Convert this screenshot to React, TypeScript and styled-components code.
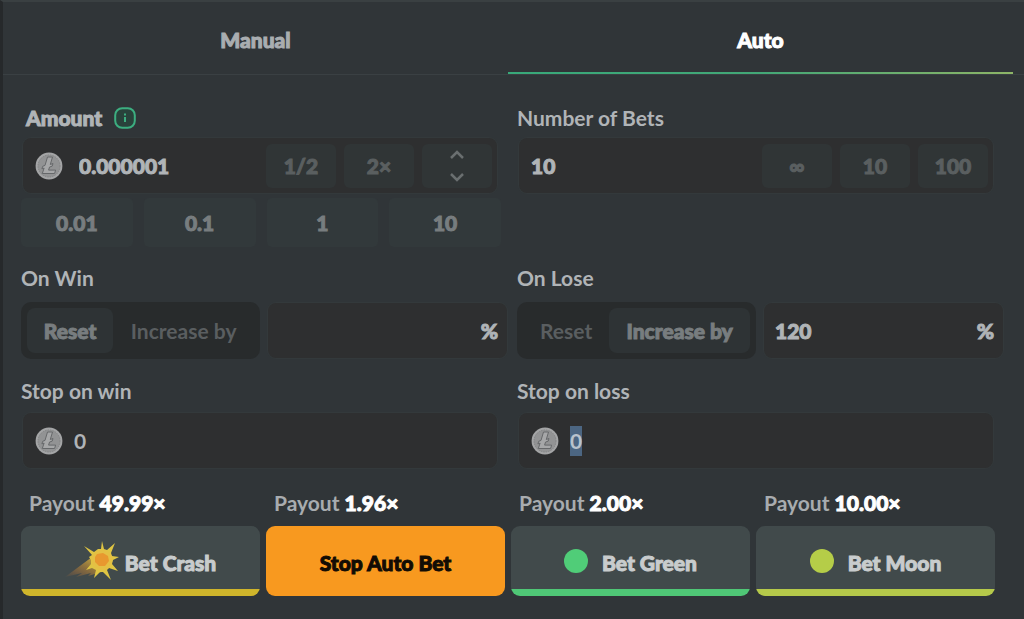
import React, { useEffect, useRef, useState } from "react";
import styled, { createGlobalStyle, css } from "styled-components";

const GlobalStyle = createGlobalStyle`
  * { box-sizing: border-box; }
  body { margin: 0; background: #303538; }
  button, input { font: inherit; color: inherit; margin: 0; padding: 0; border: 0; background: none; }
  button { cursor: pointer; }
  input:focus { outline: none; }
`;

const heavy = css`
  font-weight: 900;
  -webkit-text-stroke: 1px currentColor;
`;

const Panel = styled.main`
  min-height: 100vh;
  border-top: 2px solid #3a4042;
  border-left: 3px solid #26292b;
  background: #303538;
  color: #b0b4b7;
  font-family: Lato, "Liberation Sans", sans-serif;
  font-size: 21px;
  line-height: 24px;
  font-weight: 700;
`;

const Tabs = styled.div`
  display: grid;
  grid-template-columns: 1fr 1fr;
  padding-right: 11px;
  border-bottom: 1px solid #3a4043;
`;

const Tab = styled.button<{ $active?: boolean }>`
  height: 72px;
  padding-top: 6px;
  ${heavy}
  color: ${(p) => (p.$active ? "#ffffff" : "#a9adb0")};
  border-bottom: 2px solid transparent;
  border-image: ${(p) => (p.$active ? "linear-gradient(90deg, #38a97a, #43a877 50%, #8eb567) 1" : "none")};
`;

const Form = styled.form`
  padding: 31px 21px 20px 18px;
`;

const Columns = styled.div<{ $top?: number }>`
  display: grid;
  grid-template-columns: 1fr 1fr;
  column-gap: 10px;
  margin-top: ${(p) => p.$top ?? 0}px;
`;

const Column = styled.div`
  min-width: 0;
`;

const Caption = styled.div<{ $gap: number; $strong?: boolean }>`
  display: flex;
  align-items: center;
  gap: 12px;
  height: 24px;
  margin-bottom: ${(p) => p.$gap}px;
  padding-left: ${(p) => (p.$strong ? 5 : 0)}px;
  ${(p) => p.$strong && heavy}
`;

const InfoButton = styled.button`
  display: flex;
`;

const Field = styled.div`
  display: flex;
  align-items: center;
  gap: 8px;
  height: 55px;
  margin: 0 10px 0 2px;
  padding: 0 5px 0 12px;
  border-radius: 8px;
  background: #2e2f30;
  box-shadow: 0 0 0 1px #33393b;
`;

const Coin = styled.svg`
  flex: none;
  width: 28px;
  height: 28px;
`;

const TextInput = styled.input<{ $light?: boolean; $pad?: number }>`
  flex: 1;
  width: 0;
  min-width: 0;
  height: 30px;
  line-height: 30px;
  padding-left: ${(p) => p.$pad ?? 0}px;
  ${(p) => !p.$light && heavy}
  &::selection { background: #4c6682; color: #b9c3cc; }
`;

const FieldButton = styled.button`
  flex: none;
  width: 70px;
  height: 44px;
  border-radius: 6px;
  background: #303536;
  color: #5a5f60;
  ${heavy}
`;

const Stepper = styled.div`
  display: grid;
  grid-template-rows: 1fr 1fr;
  flex: none;
  width: 70px;
  height: 44px;
  border-radius: 6px;
  background: #303536;
  color: #6a6f70;
`;

const StepButton = styled.button`
  display: grid;
  place-items: center;
`;

const QuickRow = styled.div`
  display: grid;
  grid-template-columns: repeat(4, 1fr);
  gap: 11px;
  margin: 5px 6px 0 0;
`;

const QuickButton = styled.button`
  height: 49px;
  border-radius: 5px;
  background: #32393b;
  color: #787d7f;
  ${heavy}
`;

const ModeRow = styled.div`
  display: grid;
  grid-template-columns: 1fr 1fr;
  gap: 8px;
`;

const Toggle = styled.div`
  display: flex;
  height: 57px;
  padding: 6px;
  border-radius: 10px;
  background: #282b2c;
`;

const ToggleButton = styled.button<{ $on: boolean; $wide?: boolean }>`
  flex: ${(p) => (p.$wide ? 142 : 87)} 1 0;
  white-space: nowrap;
  border-radius: 8px;
  background: ${(p) => (p.$on ? "#2e3335" : "transparent")};
  color: ${(p) => (p.$on ? "#787d7f" : "#5a5e60")};
  ${(p) => p.$on && heavy}
`;

const Percent = styled(Field)`
  margin: 1px 0;
  padding: 0 9px 0 11px;
`;

const Unit = styled.span`
  ${heavy}
`;

const Bets = styled.div`
  display: grid;
  grid-template-columns: repeat(4, 1fr);
  gap: 6px;
  margin: 23px 8px 0 0;
`;

const Payout = styled.div`
  margin-bottom: 11px;
  padding-left: 8px;
  color: #a8acaf;
`;

const Multiplier = styled.strong`
  ${heavy}
  color: #ffffff;
`;

const BetButton = styled.button<{ $line?: string; $gap?: number }>`
  display: flex;
  align-items: center;
  justify-content: center;
  gap: ${(p) => p.$gap ?? 0}px;
  width: 100%;
  height: 70px;
  padding-top: 4px;
  border-radius: 9px;
  ${heavy}
  color: ${(p) => (p.$line ? "#c8cccd" : "#120c04")};
  background: ${(p) =>
    p.$line
      ? `linear-gradient(to top, ${p.$line} 7px, #414a4b 7px)`
      : "#f8991f"};
`;

const Dot = styled.span<{ $color: string }>`
  width: 24px;
  height: 24px;
  margin-top: -4px;
  border-radius: 50%;
  background: ${(p) => p.$color};
`;

const Comet = styled.svg`
  flex: none;
  width: 54px;
  height: 40px;
  margin-top: -4px;
`;

const CoinIcon = () => (
  <Coin viewBox="0 0 28 28" aria-hidden="true">
    <circle cx="14" cy="14" r="13.4" fill="#a4a5a6" />
    <circle cx="14" cy="14" r="11" fill="#929394" stroke="#848586" strokeDasharray="1.5 1" />
    <path d="M12.500 5h5l-2.200 7.500 2.700-1-.8 2.600-2.700 1-.9 3h7l-1 3.400H7.300l1.800-5.400-2.200.8.800-2.600 2.300-.9z" fill="#a6a7a8" stroke="#66686a" strokeWidth="1" />
  </Coin>
);

const InfoIcon = () => (
  <svg width="22" height="22" viewBox="0 0 22 22" fill="none" aria-hidden="true">
    <rect x="1.200" y="1.200" width="19.600" height="19.600" rx="7" fill="#29423b" stroke="#3cae80" strokeWidth="2" />
    <path d="M11 10v5M11 6.500v2" stroke="#3cae80" strokeWidth="2" />
  </svg>
);

const Chevron = ({ up }: { up?: boolean }) => (
  <svg width="16" height="10" viewBox="0 0 16 10" fill="none" stroke="currentColor" strokeWidth="2.500" aria-hidden="true">
    <path d={up ? "M2 8l6-6 6 6" : "M2 2l6 6 6-6"} />
  </svg>
);

const CrashIcon = () => (
  <Comet viewBox="0 0 54 40" aria-hidden="true">
    <defs>
      <linearGradient id="tail" x1="0" y1="1" x2="1" y2="0">
        <stop offset="0" stopColor="#a8663a" stopOpacity="0.050" />
        <stop offset="0.500" stopColor="#a07a3a" stopOpacity="0.800" />
        <stop offset="1" stopColor="#e0c040" />
      </linearGradient>
    </defs>
    <path d="M0 36L27 16 40 30 23 35 26 32 11 36 17 32z" fill="url(#tail)" />
    <path
      d="M19 5L29 11 33 8 36 8 37 0 39 8 42 9 50 2 46 12 47 15 54 16 48 19 47 23 53 30 44 27 42 29 46 39 38 31 35 31 29 37 31 29 27 27 21 29 26 23 26 19 24 16 27 14z"
      fill="#dfc543"
    />
    <circle cx="37" cy="19" r="10.500" fill="#e4c044" />
    <path d="M32 13l6-1 5 3 1 5-4 5-6 0-4-4 0-5z" fill="#e8982f" />
  </Comet>
);

type Mode = "reset" | "increase";

const ModeControl = ({ name, id, initial, value }: { name: string; id: string; initial: Mode; value: string }) => {
  const [mode, setMode] = useState<Mode>(initial);
  const isIncrease = mode === "increase";
  return (
    <Column>
      <Caption $gap={12} as="label" htmlFor={id}>{name}</Caption>
      <ModeRow>
        <Toggle role="group" aria-label={name}>
          <ToggleButton type="button" $on={!isIncrease} aria-pressed={!isIncrease} onClick={() => setMode("reset")}>
            Reset
          </ToggleButton>
          <ToggleButton type="button" $wide $on={isIncrease} aria-pressed={isIncrease} onClick={() => setMode("increase")}>
            Increase by
          </ToggleButton>
        </Toggle>
        <Percent>
          <TextInput id={id} defaultValue={value} />
          <Unit>%</Unit>
        </Percent>
      </ModeRow>
    </Column>
  );
};

export default function App() {
  const lossRef = useRef<HTMLInputElement>(null);

  useEffect(() => {
    lossRef.current?.focus();
    lossRef.current?.select();
  }, []);

  return (
    <Panel>
      <GlobalStyle />
      <Tabs role="tablist">
        <Tab role="tab" aria-selected={false}>Manual</Tab>
        <Tab role="tab" aria-selected $active>Auto</Tab>
      </Tabs>
      <Form onSubmit={(e) => e.preventDefault()}>
        <Columns>
          <Column>
            <Caption $gap={8} $strong>
              <label htmlFor="amount">Amount</label>
              <InfoButton type="button" aria-label="Amount info"><InfoIcon /></InfoButton>
            </Caption>
            <Field>
              <CoinIcon />
              <TextInput id="amount" defaultValue="0.000001" $pad={8} />
              <FieldButton type="button">1/2</FieldButton>
              <FieldButton type="button">2×</FieldButton>
              <Stepper>
                <StepButton type="button" aria-label="Increase amount"><Chevron up /></StepButton>
                <StepButton type="button" aria-label="Decrease amount"><Chevron /></StepButton>
              </Stepper>
            </Field>
            <QuickRow>
              {["0.01", "0.1", "1", "10"].map((v) => (
                <QuickButton type="button" key={v}>{v}</QuickButton>
              ))}
            </QuickRow>
          </Column>
          <Column>
            <Caption $gap={8} as="label" htmlFor="bets">Number of Bets</Caption>
            <Field>
              <TextInput id="bets" defaultValue="10" />
              {["∞", "10", "100"].map((v) => (
                <FieldButton type="button" key={v}>{v}</FieldButton>
              ))}
            </Field>
          </Column>
        </Columns>

        <Columns $top={19}>
          <ModeControl name="On Win" id="on-win" initial="reset" value="" />
          <ModeControl name="On Lose" id="on-lose" initial="increase" value="120" />
        </Columns>

        <Columns $top={20}>
          <Column>
            <Caption $gap={10} as="label" htmlFor="stop-win">Stop on win</Caption>
            <Field>
              <CoinIcon />
              <TextInput id="stop-win" defaultValue="0" $light $pad={3} />
            </Field>
          </Column>
          <Column>
            <Caption $gap={10} as="label" htmlFor="stop-loss">Stop on loss</Caption>
            <Field>
              <CoinIcon />
              <TextInput id="stop-loss" defaultValue="0" $light $pad={3} ref={lossRef} />
            </Field>
          </Column>
        </Columns>

        <Bets>
          <div>
            <Payout>Payout <Multiplier>49.99×</Multiplier></Payout>
            <BetButton type="button" $line="#cfb52b" $gap={6}><CrashIcon />Bet Crash</BetButton>
          </div>
          <div>
            <Payout>Payout <Multiplier>1.96×</Multiplier></Payout>
            <BetButton type="button">Stop Auto Bet</BetButton>
          </div>
          <div>
            <Payout>Payout <Multiplier>2.00×</Multiplier></Payout>
            <BetButton type="button" $line="#4fc776" $gap={14}><Dot $color="#50cd78" />Bet Green</BetButton>
          </div>
          <div>
            <Payout>Payout <Multiplier>10.00×</Multiplier></Payout>
            <BetButton type="button" $line="#b5c94a" $gap={14}><Dot $color="#b5cd48" />Bet Moon</BetButton>
          </div>
        </Bets>
      </Form>
    </Panel>
  );
}
